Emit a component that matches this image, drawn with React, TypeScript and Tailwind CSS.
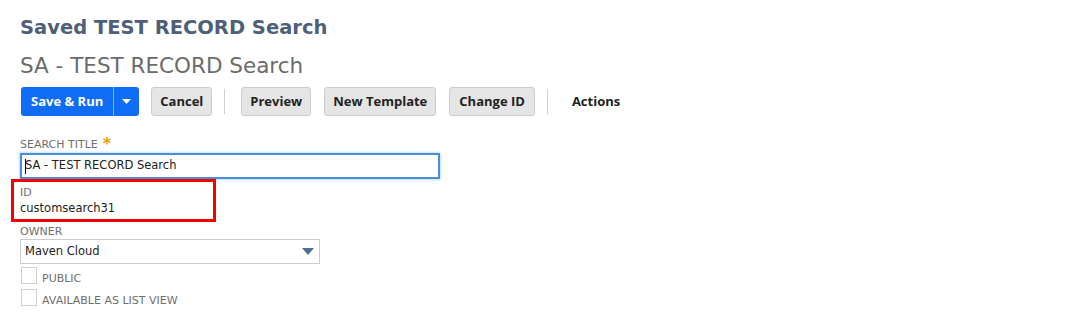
const body = "font-['DejaVu_Sans',sans-serif]";
const btnFont = "font-['Open_Sans',sans-serif]";

export default function App() {
  return (
    <div className={`w-[1091px] h-[317px] bg-white ${body} overflow-hidden`}>
      <div className="pl-5 pt-[14px]">
        {/* ---------- Header ---------- */}
        <h1 className="text-[19.5px] leading-[28px] font-bold text-[#4d5f79]">
          Saved TEST RECORD Search
        </h1>
        <h2 className="text-[21.5px] leading-[30px] mt-[9px] text-[#6b6b6b]">
          SA - TEST RECORD Search
        </h2>

        {/* ---------- Toolbar ---------- */}
        <div className={`flex items-center mt-[6px] h-[29px] ${btnFont}`}>
          <div className="ml-px flex h-[29px] rounded-[3px] bg-[#0f6df5] text-white overflow-hidden">
            <button className="px-[10px] text-[13px] font-bold border-r border-[#7fb0fa]">
              Save &amp; Run
            </button>
            <button className="w-[25px] flex items-center justify-center">
              <svg width="9" height="5" viewBox="0 0 9 5">
                <path d="M0 0h9L4.5 5z" fill="white" />
              </svg>
            </button>
          </div>
          <Btn className="ml-[12px]">Cancel</Btn>
          <Sep />
          <Btn>Preview</Btn>
          <Btn className="ml-[13px]">New Template</Btn>
          <Btn className="ml-[13px] px-[9px]">Change ID</Btn>
          <Sep />
          <span className="ml-[8px] text-[13px] font-bold text-[#222]">Actions</span>
        </div>

        {/* ---------- Form ---------- */}
        <div className="mt-[22px] text-[11px] uppercase text-[#6f6f6f] leading-[14px] flex items-start">
          Search Title
          <span className="ml-[5px] text-[#e8a100] text-[16px] leading-[12px] font-bold">*</span>
        </div>
        <div className="mt-[1px] w-[420px] h-[26px] border-2 border-[#4a8ed8] shadow-[0_0_3px_#8fc0f0] flex items-center pl-[3px] text-[11.5px] text-[#222]">
          <span className="w-px h-[15px] bg-black -mr-px" />
          SA - TEST RECORD Search
        </div>

        <div className="-ml-[9px] w-[205px] h-[43px] border-[3px] border-[#f50000] pl-[6px] pt-[4px]">
          <div className="text-[11px] leading-[14px] text-[#6f6f6f]">ID</div>
          <div className="text-[11.5px] leading-[16px] text-[#222]">customsearch31</div>
        </div>

        <div className="mt-[3px] text-[11px] uppercase text-[#6f6f6f] leading-[14px]">Owner</div>
        <div className="w-[300px] h-[25px] border border-[#cccccc] flex items-center justify-between pl-[4px] pr-[5px] text-[11.5px] text-[#222]">
          Maven Cloud
          <svg width="12" height="7" viewBox="0 0 12 7">
            <path d="M0 0h12L6 7z" fill="#4d6f94" />
          </svg>
        </div>

        <Check label="Public" className="mt-[3px]" />
        <Check label="Available as list view" className="mt-[5px]" />
      </div>
    </div>
  );
}

function Btn({ children, className = "" }: { children: React.ReactNode; className?: string }) {
  return (
    <button
      className={`h-[29px] px-[8px] rounded-[3px] border border-[#cccccc] bg-[#e5e5e5] text-[13px] font-bold text-[#222] ${className}`}
    >
      {children}
    </button>
  );
}

function Sep() {
  return <div className="ml-[12px] mr-[16px] w-px h-[25px] bg-[#cfcfcf]" />;
}

function Check({ label, className = "" }: { label: string; className?: string }) {
  return (
    <div className={`flex items-end h-[17px] ${className}`}>
      <span className="ml-px w-[16px] h-[17px] border border-[#d0d0d0]" />
      <span className="ml-[5px] text-[11px] uppercase leading-[12px] text-[#6f6f6f] -mb-[1px]">{label}</span>
    </div>
  );
}
